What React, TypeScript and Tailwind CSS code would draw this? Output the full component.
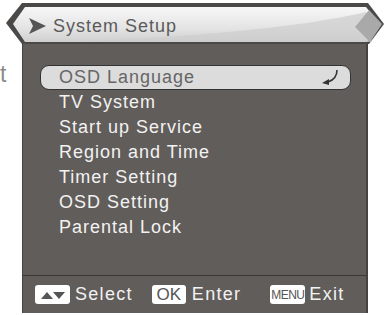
import React from 'react';

const menuItems = [
  'OSD Language',
  'TV System',
  'Start up Service',
  'Region and Time',
  'Timer Setting',
  'OSD Setting',
  'Parental Lock',
];

// Header bar shape (pointed ends, glossy gradient)
function HeaderShape() {
  return (
    <svg className="absolute inset-0" width="387" height="44" viewBox="0 0 387 44">
      <defs>
        <linearGradient id="hdr" x1="0" y1="0" x2="0" y2="1">
          <stop offset="0" stopColor="#f7f7f7" />
          <stop offset="0.6" stopColor="#e4e4e4" />
          <stop offset="1" stopColor="#cfcfcf" />
        </linearGradient>
      </defs>
      <polygon points="6,23 22,3 368,3 384,24 369,44 22,44" fill="#4b4948" />
      <polygon points="13,24 25,7 366,7 380,24 367,42 25,42" fill="url(#hdr)" />
      <path d="M60,42 C180,38 300,28 366,12 L372,42 Z" fill="#cdcdcd" opacity="0.7" />
      <polygon points="355,27 369,10 382,24 370,42" fill="#a9a9a9" />
    </svg>
  );
}

function EnterArrow() {
  return (
    <svg width="20" height="20" viewBox="0 0 20 20">
      <path d="M17,2 C17,8 14,12 8,14" fill="none" stroke="#333" strokeWidth="1.6" />
      <polygon points="2,15 9,11 9,17" fill="#333" />
    </svg>
  );
}

export default function App() {
  return (
    <div className="w-[387px] h-[315px] bg-white overflow-hidden font-['Liberation_Sans',Arial,sans-serif]">
      {/* Title bar */}
      <div className="relative h-[44px]">
        <HeaderShape />
        <div className="relative flex items-center h-full pl-[29px] pt-[8px]">
          <svg width="17" height="16" viewBox="0 0 17 16">
            <polygon points="0,0 17,8 0,16 4,8" fill="#555" />
          </svg>
          <span className="ml-[7px] text-[18px] tracking-[1px] text-[#5a5a5a]">System Setup</span>
        </div>
      </div>

      <div className="flex">
        <div className="w-[22px] pt-[19px] text-[23px] leading-none text-[#8a8a8a]">t</div>

        {/* Panel */}
        <div className="w-[346px] h-[269px] flex flex-col bg-[#615d5a] border-l border-r-2 border-[#454240]">
          <div className="flex-1 pt-[21px] pl-[17px] pr-[15px]">
            {menuItems.map((item, i) =>
              i === 0 ? (
                <div
                  key={item}
                  className="h-[25px] flex items-center justify-between pl-[18px] pr-[10px] bg-[#dcdcdc] border border-[#333] rounded-[9px] text-[#666] text-[18px] tracking-[1px]"
                >
                  <span>{item}</span>
                  <EnterArrow />
                </div>
              ) : (
                <div key={item} className="h-[25px] flex items-center pl-[19px] text-[#f2f2f2] text-[18px] tracking-[1px]">
                  {item}
                </div>
              )
            )}
          </div>

          {/* Key hints */}
          <div className="h-[38px] flex items-center border-t border-[#3b3937] pl-[12px] text-[18px] tracking-[1.3px] text-[#f2f2f2]">
            <div className="w-[35px] h-[19px] rounded-[3px] bg-white flex items-center justify-center gap-[1px]">
              <svg width="26" height="10" viewBox="0 0 26 10">
                <polygon points="1,9 7,2 13,9" fill="#555" />
                <polygon points="13,2 25,2 19,9" fill="#555" />
              </svg>
            </div>
            <span className="ml-[5px]">Select</span>
            <div className="ml-[19px] w-[34px] h-[19px] rounded-[3px] bg-white flex items-center justify-center text-[#555] text-[17px] tracking-normal font-['Liberation_Sans_Narrow','Liberation_Sans',sans-serif]">
              OK
            </div>
            <span className="ml-[6px]">Enter</span>
            <div className="ml-[29px] w-[35px] h-[19px] rounded-[3px] bg-white flex items-center justify-center text-[#555] text-[12px] tracking-[-0.5px] font-['Liberation_Sans_Narrow','Liberation_Sans',sans-serif]">
              MENU
            </div>
            <span className="ml-[4px]">Exit</span>
          </div>
        </div>
      </div>
    </div>
  );
}
